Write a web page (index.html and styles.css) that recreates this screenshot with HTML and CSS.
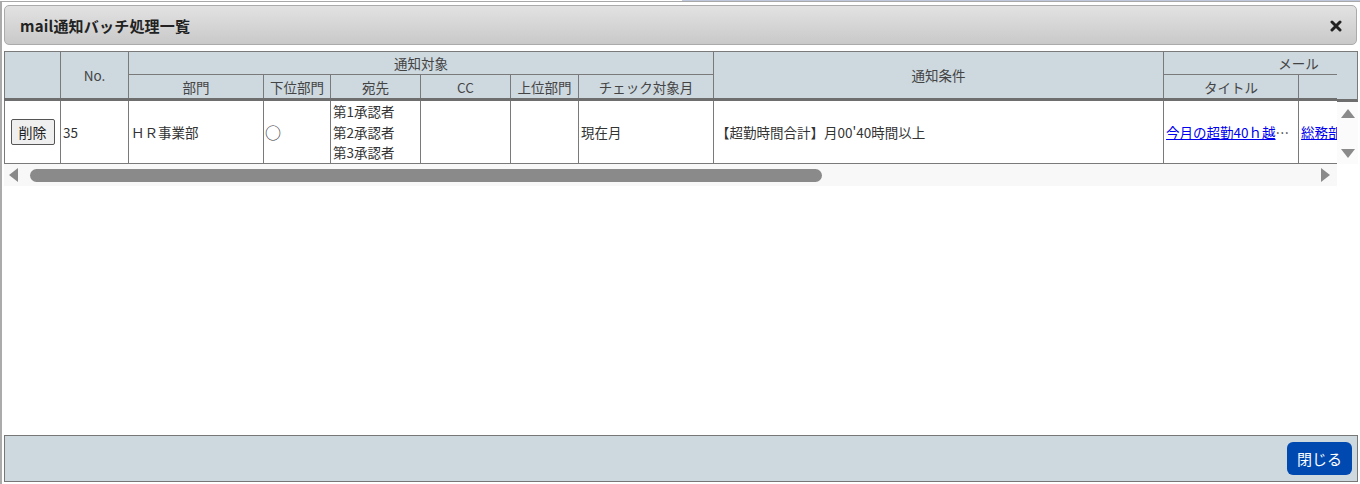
FILE: index.html
```html
<!DOCTYPE html>
<html lang="ja">
<head>
    <meta charset="UTF-8">
    <title>mail通知バッチ処理一覧</title>
    <link rel="stylesheet" href="styles.css">
</head>
<body>
    <div class="top-edge">
        <div class="edge-left"></div>
        <div class="edge-right"></div>
    </div>
    <div class="dialog">
        <div class="titlebar">
            <h1 class="title">mail通知バッチ処理一覧</h1>
            <button class="close-btn" title="閉じる">
                <svg width="12" height="12" viewBox="0 0 12 12">
                    <path d="M2 2 L10 10 M10 2 L2 10" stroke="#222" stroke-width="3" stroke-linecap="round"/>
                </svg>
            </button>
        </div>

        <div class="grid-area">
            <div class="table-clip">
                <table class="list">
                    <colgroup>
                        <col style="width:56px">
                        <col style="width:68px">
                        <col style="width:135px">
                        <col style="width:67px">
                        <col style="width:90px">
                        <col style="width:90px">
                        <col style="width:68px">
                        <col style="width:135px">
                        <col style="width:450px">
                        <col style="width:135px">
                        <col style="width:135px">
                    </colgroup>
                    <thead>
                        <tr class="head-1">
                            <th rowspan="2" class="thick"></th>
                            <th rowspan="2" class="thick">No.</th>
                            <th colspan="6">通知対象</th>
                            <th rowspan="2" class="thick">通知条件</th>
                            <th colspan="2">メール</th>
                        </tr>
                        <tr class="head-2">
                            <th class="thick">部門</th>
                            <th class="thick">下位部門</th>
                            <th class="thick">宛先</th>
                            <th class="thick">CC</th>
                            <th class="thick">上位部門</th>
                            <th class="thick">チェック対象月</th>
                            <th class="thick">タイトル</th>
                            <th class="thick">本文</th>
                        </tr>
                    </thead>
                    <tbody>
                        <tr class="data-row">
                            <td class="center"><button class="del-btn">削除</button></td>
                            <td>35</td>
                            <td>ＨＲ事業部</td>
                            <td class="mark">○</td>
                            <td class="multi">第1承認者<br>第2承認者<br>第3承認者</td>
                            <td></td>
                            <td></td>
                            <td>現在月</td>
                            <td>【超勤時間合計】月00'40時間以上</td>
                            <td class="cut"><a href="#">今月の超勤40ｈ越え通知のお知らせ</a></td>
                            <td class="cut"><a href="#">総務部</a></td>
                        </tr>
                    </tbody>
                </table>
            </div>

            <div class="vscroll">
                <div class="vscroll-head"></div>
                <div class="vscroll-body">
                    <span class="arrow up"></span>
                    <span class="arrow down"></span>
                </div>
            </div>

            <div class="hscroll">
                <span class="arrow left"></span>
                <div class="thumb"></div>
                <span class="arrow right"></span>
            </div>
        </div>

        <div class="footer">
            <button class="primary-btn">閉じる</button>
        </div>
    </div>
</body>
</html>
```

FILE: styles.css
```css
*
{
    margin: 0;
    padding: 0;
    box-sizing: border-box;
}

body
{
    width: 1360px;
    height: 484px;
    overflow: hidden;
    background-color: #fff;
    font-family: "Noto Sans CJK JP", "Noto Sans", sans-serif;
    font-size: 13.5px;
    color: #333;
}

/* window edge behind the dialog */
.top-edge
{
    display: flex;
    height: 1px;
}

.edge-left
{
    width: 682px;
    background-color: #fff;
}

.edge-right
{
    flex: 1;
    background-color: #bfc7dc;
}

.dialog
{
    height: 483px;
    border-top: 1px solid #a8a8a8;
    border-left: 2px solid #ababab;
    padding: 3px 2px 2px 2px;
    display: flex;
    flex-direction: column;
}

/* Title bar */
.titlebar
{
    width: 1353px;
    height: 40px;
    border: 1px solid #ababab;
    border-radius: 5px;
    background: linear-gradient(#e2e2e2, #c9c9c9);
    display: flex;
    align-items: center;
    justify-content: space-between;
    padding: 0 12px 0 15px;
}

.title
{
    font-size: 15px;
    font-weight: bold;
    color: #222;
    letter-spacing: 0.2px;
}

.close-btn
{
    border: none;
    background: transparent;
    width: 16px;
    height: 16px;
    display: flex;
    align-items: center;
    justify-content: center;
    margin-top: 2px;
}

/* Table area */
.grid-area
{
    margin-top: 6px;
    display: grid;
    grid-template-columns: 1333px 21px;
    grid-template-rows: auto 22px;
}

.table-clip
{
    overflow: hidden;
}

.list
{
    border-collapse: collapse;
    table-layout: fixed;
    width: 1430px;
}

.list th,
.list td
{
    border: 1px solid #7a7a7a;
    font-weight: normal;
    white-space: nowrap;
}

.list th
{
    background-color: #cdd8df;
    color: #444;
    text-align: center;
}

.head-1 th
{
    height: 23px;
}

.head-2 th
{
    height: 25px;
}

.list th.thick
{
    border-bottom: 3px solid #6e6e6e;
}

.data-row td
{
    height: 64px;
    padding: 0 2px;
    vertical-align: middle;
    text-align: left;
}

.data-row td.center
{
    text-align: center;
}

.data-row td.mark
{
    font-size: 16px;
    padding-left: 1px;
}

.data-row td.multi
{
    line-height: 20.5px;
}

.data-row td.cut
{
    overflow: hidden;
    text-overflow: ellipsis;
}

.data-row a
{
    color: #0000ee;
}

.del-btn
{
    font-family: inherit;
    font-size: 14px;
    color: #222;
    background-color: #efefef;
    border: 1px solid #555;
    border-radius: 2px;
    height: 26px;
    padding: 0 7px;
}

/* Fake scrollbars */
.vscroll
{
    display: flex;
    flex-direction: column;
}

.vscroll-head
{
    height: 51px;
    background-color: #cdd8df;
    border: 1px solid #7a7a7a;
    border-left: none;
    border-bottom: 3px solid #6e6e6e;
}

.vscroll-body
{
    flex: 1;
    background-color: #fbfbfb;
    display: flex;
    flex-direction: column;
    align-items: center;
    justify-content: space-between;
    padding: 7px 0 6px 0;
}

.hscroll
{
    background-color: #f8f8f8;
    display: flex;
    align-items: center;
    padding: 0 7px 0 5px;
}

.thumb
{
    width: 792px;
    height: 13px;
    margin-left: 12px;
    border-radius: 7px;
    background-color: #8a8a8a;
}

.arrow
{
    width: 0;
    height: 0;
    border-style: solid;
    border-color: transparent;
}

.arrow.up
{
    border-width: 0 7px 9px 7px;
    border-bottom-color: #8a8a8a;
}

.arrow.down
{
    border-width: 9px 7px 0 7px;
    border-top-color: #8a8a8a;
}

.arrow.left
{
    border-width: 7px 9px 7px 0;
    border-right-color: #8a8a8a;
}

.arrow.right
{
    margin-left: auto;
    border-width: 7px 0 7px 9px;
    border-left-color: #8a8a8a;
}

/* Footer */
.footer
{
    margin-top: auto;
    width: 1354px;
    height: 47px;
    background-color: #cdd8df;
    border: 1px solid #777;
    display: flex;
    align-items: center;
    justify-content: flex-end;
    padding-right: 5px;
}

.primary-btn
{
    font-family: inherit;
    font-size: 15px;
    color: #fff;
    background-color: #0049b1;
    border: none;
    border-radius: 6px;
    width: 65px;
    height: 33px;
    margin-bottom: 1px;
}
```
